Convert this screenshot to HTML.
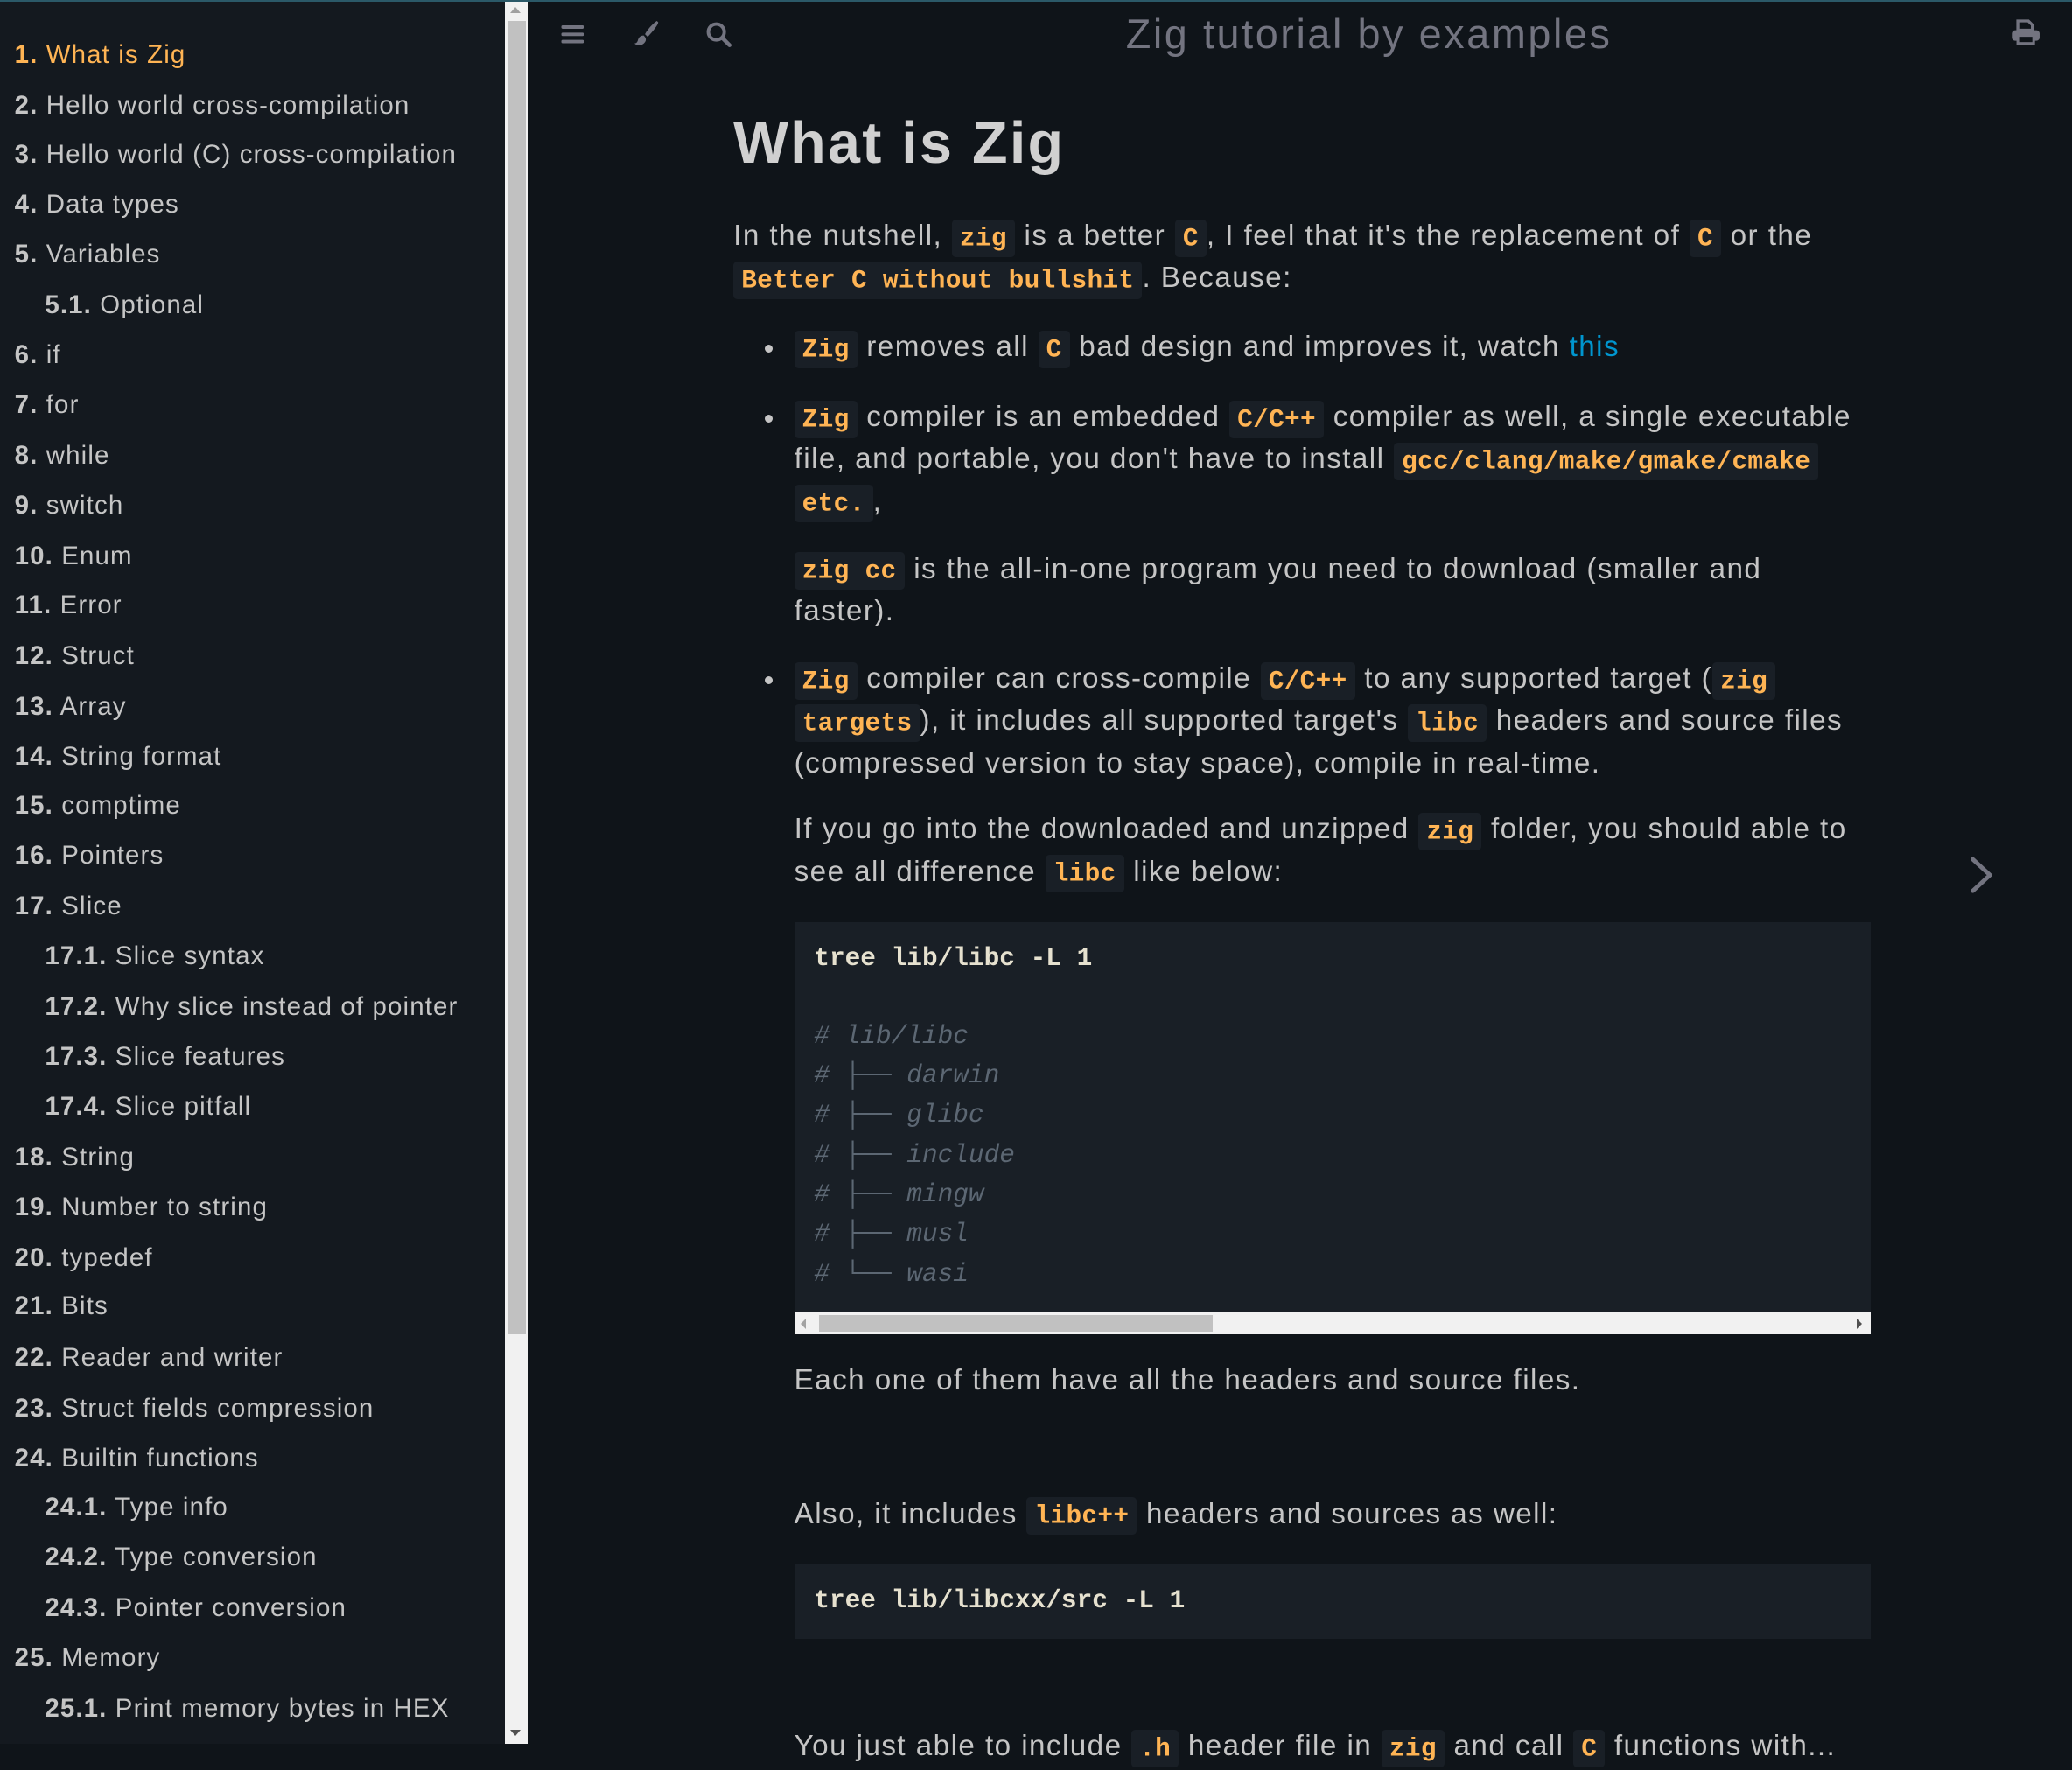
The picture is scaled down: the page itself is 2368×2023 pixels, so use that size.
<!DOCTYPE html>
<html><head><meta charset="utf-8"><style>
html,body{margin:0;padding:0}
body{width:1568px;height:1320px;overflow:hidden;background:#0f1419;zoom:1.51021;font-family:"Liberation Sans",sans-serif;position:relative;color:#c5c5c5}
.sb{position:absolute;left:0;top:0;width:382px;height:1320px;background:#14191f}
.sc{position:absolute;left:382px;top:0;width:18px;height:1320px;background:#f1f1f1}
.th{position:absolute;left:385px;top:16px;width:13px;height:994px;background:#c1c1c1}
.topline{position:absolute;left:0;top:0;width:1568px;height:1.5px;background:#2b5968}
.it{position:absolute;font-size:19.5px;line-height:28px;height:28px;white-space:nowrap;color:#c5c5c5;letter-spacing:0.75px}
.it b{font-weight:bold}
.a{color:#ffb454}
.l{position:absolute;font-size:22px;line-height:32px;height:32px;white-space:nowrap;color:#c5c5c5;letter-spacing:0.95px}
code{font-family:"Liberation Mono",monospace;font-size:19.5px;letter-spacing:0.2px;color:#ffb454;background:#191f26;padding:3px 6px;border-radius:3px;font-weight:bold}
.dot{position:absolute;left:579px;width:6px;height:6px;border-radius:50%;background:#c5c5c5}
.pre{position:absolute;left:601px;width:815px;background:#191f26}
.m{position:absolute;left:616px;font-family:"Liberation Mono",monospace;font-size:19.5px;line-height:28px;white-space:pre;color:#e6e1cf;font-weight:bold}
.c{color:#5c6773;font-style:italic;font-weight:normal}
</style></head><body>
<div class="sb"></div>
<div class="sc"></div><div class="th"></div>
<div style="position:absolute;left:386px;top:5px;width:0;height:0;border-left:4px solid transparent;border-right:4px solid transparent;border-bottom:5px solid #a0a0a0"></div>
<div style="position:absolute;left:386px;top:1309px;width:0;height:0;border-left:4px solid transparent;border-right:4px solid transparent;border-top:5px solid #505050"></div>
<div class="topline"></div>

<div class="it a" style="left:11px;top:28px"><b>1.</b> What is Zig</div>
<div class="it" style="left:11px;top:66px"><b>2.</b> Hello world cross-compilation</div>
<div class="it" style="left:11px;top:103px"><b>3.</b> Hello world (C) cross-compilation</div>
<div class="it" style="left:11px;top:141px"><b>4.</b> Data types</div>
<div class="it" style="left:11px;top:179px"><b>5.</b> Variables</div>
<div class="it" style="left:34px;top:217px"><b>5.1.</b> Optional</div>
<div class="it" style="left:11px;top:255px"><b>6.</b> if</div>
<div class="it" style="left:11px;top:293px"><b>7.</b> for</div>
<div class="it" style="left:11px;top:331px"><b>8.</b> while</div>
<div class="it" style="left:11px;top:369px"><b>9.</b> switch</div>
<div class="it" style="left:11px;top:407px"><b>10.</b> Enum</div>
<div class="it" style="left:11px;top:444px"><b>11.</b> Error</div>
<div class="it" style="left:11px;top:483px"><b>12.</b> Struct</div>
<div class="it" style="left:11px;top:521px"><b>13.</b> Array</div>
<div class="it" style="left:11px;top:559px"><b>14.</b> String format</div>
<div class="it" style="left:11px;top:596px"><b>15.</b> comptime</div>
<div class="it" style="left:11px;top:634px"><b>16.</b> Pointers</div>
<div class="it" style="left:11px;top:672px"><b>17.</b> Slice</div>
<div class="it" style="left:34px;top:710px"><b>17.1.</b> Slice syntax</div>
<div class="it" style="left:34px;top:748px"><b>17.2.</b> Why slice instead of pointer</div>
<div class="it" style="left:34px;top:786px"><b>17.3.</b> Slice features</div>
<div class="it" style="left:34px;top:824px"><b>17.4.</b> Slice pitfall</div>
<div class="it" style="left:11px;top:862px"><b>18.</b> String</div>
<div class="it" style="left:11px;top:900px"><b>19.</b> Number to string</div>
<div class="it" style="left:11px;top:938px"><b>20.</b> typedef</div>
<div class="it" style="left:11px;top:975px"><b>21.</b> Bits</div>
<div class="it" style="left:11px;top:1014px"><b>22.</b> Reader and writer</div>
<div class="it" style="left:11px;top:1052px"><b>23.</b> Struct fields compression</div>
<div class="it" style="left:11px;top:1090px"><b>24.</b> Builtin functions</div>
<div class="it" style="left:34px;top:1127px"><b>24.1.</b> Type info</div>
<div class="it" style="left:34px;top:1165px"><b>24.2.</b> Type conversion</div>
<div class="it" style="left:34px;top:1203px"><b>24.3.</b> Pointer conversion</div>
<div class="it" style="left:11px;top:1241px"><b>25.</b> Memory</div>
<div class="it" style="left:34px;top:1279px"><b>25.1.</b> Print memory bytes in HEX</div>

<svg style="position:absolute;left:424px;top:17px" width="20" height="18" viewBox="0 0 20 18"><g fill="#737480"><rect x="1" y="2" width="17" height="2.6" rx="1"/><rect x="1" y="7.5" width="17" height="2.6" rx="1"/><rect x="1" y="13" width="17" height="2.6" rx="1"/></g></svg>
<svg style="position:absolute;left:478px;top:14px" width="22" height="22" viewBox="0 0 22 22"><path d="M19 2 C17 3 12 8 10 12 L12 14 C15 11 20 5 20 3 Z" fill="#737480"/><path d="M9 13 C6 13 5 15 4.5 17 C4 18.5 3 19 2 19 C4 21 8 21 10 18 C11 16.5 11 15 9 13 Z" fill="#737480"/></svg>
<svg style="position:absolute;left:533px;top:15px" width="22" height="22" viewBox="0 0 22 22"><circle cx="9" cy="9" r="6" fill="none" stroke="#737480" stroke-width="2.6"/><path d="M13.5 13.5 L19 19" stroke="#737480" stroke-width="3" stroke-linecap="round"/></svg>
<div style="position:absolute;left:852px;top:4px;font-size:31px;line-height:44px;color:#737480;white-space:nowrap;letter-spacing:1.7px">Zig tutorial by examples</div>
<svg style="position:absolute;left:1521px;top:14px" width="24" height="22" viewBox="0 0 24 22"><path d="M6 2 H14 L17 5 V9 H6 Z" fill="none" stroke="#737480" stroke-width="2.2"/><rect x="1.5" y="9" width="21" height="8" rx="2.5" fill="#737480"/><rect x="6" y="13" width="12" height="6" fill="#0f1419" stroke="#737480" stroke-width="2"/></svg>
<svg style="position:absolute;left:1488px;top:646px" width="26" height="32" viewBox="0 0 26 32"><path d="M5 4 L18 16 L5 28" fill="none" stroke="#737480" stroke-width="3.2" stroke-linecap="round" stroke-linejoin="round"/></svg>

<div style="position:absolute;left:555px;top:83px;font-size:44px;line-height:52px;font-weight:bold;color:#d0d0d0;white-space:nowrap;letter-spacing:1.5px">What is Zig</div>
<div class="l" style="left:555px;top:163px">In the nutshell, <code>zig</code> is a better <code>C</code>, I feel that it's the replacement of <code>C</code> or the</div>
<div class="l" style="left:555px;top:195px"><code>Better C without bullshit</code>. Because:</div>

<div class="dot" style="top:261px"></div>
<div class="l" style="left:601px;top:247px"><code>Zig</code> removes all <code>C</code> bad design and improves it, watch <span style="color:#0096cf">this</span></div>
<div class="dot" style="top:314px"></div>
<div class="l" style="left:601px;top:300px"><code>Zig</code> compiler is an embedded <code>C/C++</code> compiler as well, a single executable</div>
<div class="l" style="left:601px;top:332px">file, and portable, you don't have to install <code>gcc/clang/make/gmake/cmake</code></div>
<div class="l" style="left:601px;top:364px"><code>etc.</code>,</div>
<div class="l" style="left:601px;top:415px"><code>zig cc</code> is the all-in-one program you need to download (smaller and</div>
<div class="l" style="left:601px;top:447px">faster).</div>
<div class="dot" style="top:512px"></div>
<div class="l" style="left:601px;top:498px"><code>Zig</code> compiler can cross-compile <code>C/C++</code> to any supported target (<code>zig</code></div>
<div class="l" style="left:601px;top:530px"><code>targets</code>), it includes all supported target's <code>libc</code> headers and source files</div>
<div class="l" style="left:601px;top:562px">(compressed version to stay space), compile in real-time.</div>
<div class="l" style="left:601px;top:612px">If you go into the downloaded and unzipped <code>zig</code> folder, you should able to</div>
<div class="l" style="left:601px;top:644px">see all difference <code>libc</code> like below:</div>

<div class="pre" style="top:698px;height:295px"></div>
<div class="m" style="top:711px">tree lib/libc -L 1</div>
<div class="m c" style="top:770px"># lib/libc</div>
<div class="m c" style="top:800px"># ├── darwin</div>
<div class="m c" style="top:830px"># ├── glibc</div>
<div class="m c" style="top:860px"># ├── include</div>
<div class="m c" style="top:890px"># ├── mingw</div>
<div class="m c" style="top:920px"># ├── musl</div>
<div class="m c" style="top:950px"># └── wasi</div>
<div style="position:absolute;left:601px;top:993px;width:815px;height:17px;background:#f1f1f1"></div>
<div style="position:absolute;left:620px;top:995px;width:298px;height:13px;background:#c1c1c1"></div>
<div style="position:absolute;left:606px;top:998px;width:0;height:0;border-top:4px solid transparent;border-bottom:4px solid transparent;border-right:4px solid #a3a3a3"></div>
<div style="position:absolute;left:1405px;top:998px;width:0;height:0;border-top:4px solid transparent;border-bottom:4px solid transparent;border-left:4px solid #505050"></div>

<div class="l" style="left:601px;top:1029px">Each one of them have all the headers and source files.</div>
<div class="l" style="left:601px;top:1130px">Also, it includes <code>libc++</code> headers and sources as well:</div>
<div class="pre" style="top:1184px;height:56px"></div>
<div class="m" style="top:1197px">tree lib/libcxx/src -L 1</div>
<div class="l" style="left:601px;top:1306px">You just able to include <code>.h</code> header file in <code>zig</code> and call <code>C</code> functions with...</div>
</body></html>
